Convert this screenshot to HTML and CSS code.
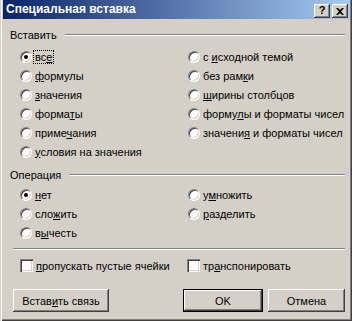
FILE: index.html
```html
<!DOCTYPE html>
<html lang="ru">
<head>
    <meta charset="UTF-8">
    <title>Специальная вставка</title>
    <link rel="stylesheet" href="styles.css">
</head>
<body>
    <div class="window">
        <div class="titlebar">
            <span class="title">Специальная вставка</span>
            <div class="tbtns">
                <span class="tbtn help">?</span>
                <span class="tbtn close">
                    <svg width="8" height="7" viewBox="0 0 8 7"><path d="M0 0h2l2 2 2-2h2L5 3.5 8 7H6L4 5 2 7H0l3-3.5z" fill="#000"/></svg>
                </span>
            </div>
        </div>

        <div class="content">
            <div class="section-head"><span>Вставить</span><div class="rule"></div></div>
            <div class="cols">
                <div class="col">
                    <label class="opt"><span class="radio checked"></span><span class="focus">вс<u>е</u></span></label>
                    <label class="opt"><span class="radio"></span><span><u>ф</u>ормулы</span></label>
                    <label class="opt"><span class="radio"></span><span><u>з</u>начения</span></label>
                    <label class="opt"><span class="radio"></span><span>форма<u>т</u>ы</span></label>
                    <label class="opt"><span class="radio"></span><span>приме<u>ч</u>ания</span></label>
                    <label class="opt"><span class="radio"></span><span><u>у</u>словия на значения</span></label>
                </div>
                <div class="col">
                    <label class="opt"><span class="radio"></span><span>с <u>и</u>сходной темой</span></label>
                    <label class="opt"><span class="radio"></span><span>без рам<u>к</u>и</span></label>
                    <label class="opt"><span class="radio"></span><span><u>ш</u>ирины столбцов</span></label>
                    <label class="opt"><span class="radio"></span><span>форму<u>л</u>ы и форматы чисел</span></label>
                    <label class="opt"><span class="radio"></span><span>значени<u>я</u> и форматы чисел</span></label>
                </div>
            </div>

            <div class="section-head second"><span>Операция</span><div class="rule"></div></div>
            <div class="cols">
                <div class="col">
                    <label class="opt"><span class="radio checked"></span><span><u>н</u>ет</span></label>
                    <label class="opt"><span class="radio"></span><span>сло<u>ж</u>ить</span></label>
                    <label class="opt"><span class="radio"></span><span>в<u>ы</u>честь</span></label>
                </div>
                <div class="col">
                    <label class="opt"><span class="radio"></span><span>у<u>м</u>ножить</span></label>
                    <label class="opt"><span class="radio"></span><span><u>р</u>азделить</span></label>
                </div>
            </div>

            <div class="sep"></div>

            <div class="cols checks">
                <label class="opt"><span class="check"></span><span><u>п</u>ропускать пустые ячейки</span></label>
                <label class="opt"><span class="check"></span><span>тр<u>а</u>нспонировать</span></label>
            </div>

            <div class="buttons">
                <button class="btn link">Встав<u>и</u>ть связь</button>
                <button class="btn ok">OK</button>
                <button class="btn cancel">Отмена</button>
            </div>
        </div>
    </div>
</body>
</html>
```

FILE: styles.css
```css
body {
    margin: 0;
    background: #d4d0c8;
    font-family: "Liberation Sans", Arial, sans-serif;
    font-size: 11px;
    color: #000;
}

.window {
    width: 352px;
    height: 321px;
    box-sizing: border-box;
    padding: 0 2px 3px 3px;
    background: #d4d0c8;
    box-shadow: inset 1px 0 #d4d0c8, inset 2px 0 #fff, inset -1px -1px #404040, inset -2px -2px #808080;
}

.titlebar {
    height: 19px;
    display: flex;
    align-items: center;
    justify-content: space-between;
    padding: 0 2px 0 3px;
    background: linear-gradient(to right, #0a246a, #a6caf0);
}

.title {
    color: #fff;
    font-weight: bold;
    font-size: 12px;
    margin-top: -1px;
}

.tbtns {
    display: flex;
    gap: 2px;
    margin-top: 3px;
}

.tbtn {
    width: 16px;
    height: 14px;
    box-sizing: border-box;
    display: flex;
    align-items: center;
    justify-content: center;
    background: #d4d0c8;
    box-shadow: inset -1px -1px #404040, inset 1px 1px #fff, inset -2px -2px #808080, inset 2px 2px #d4d0c8;
    font-weight: bold;
    font-size: 11px;
    line-height: 1;
}

.help {
    padding-bottom: 1px;
}

.content {
    padding: 9px 5px 0 7px;
}

.section-head {
    display: flex;
    align-items: center;
    gap: 8px;
    height: 13px;
    margin-bottom: 6px;
}

.section-head.second {
    margin-top: 7px;
    margin-bottom: 4px;
}

.rule {
    flex: 1;
    border-top: 1px solid #808080;
    border-bottom: 1px solid #fff;
}

.cols {
    display: grid;
    grid-template-columns: 168px 1fr;
    padding-left: 10px;
}

.opt {
    height: 19px;
    display: flex;
    align-items: center;
    gap: 3px;
}

.radio {
    position: relative;
    width: 12px;
    height: 12px;
    box-sizing: border-box;
    border-radius: 50%;
    border: 1px solid;
    border-color: #808080 #fff #fff #808080;
    background: #fff;
    box-shadow: inset 1px 1px #404040, inset -1px -1px #d4d0c8;
}

.radio.checked::after {
    content: "";
    position: absolute;
    left: 3px;
    top: 3px;
    width: 4px;
    height: 4px;
    border-radius: 50%;
    background: #000;
}

.focus {
    outline: 1px dotted #000;
    padding: 0 1px;
    margin-left: -1px;
}

.sep {
    margin-top: 6px;
    border-top: 1px solid #808080;
    border-bottom: 1px solid #fff;
    margin-left: 3px;
}

.checks {
    margin-top: 6px;
    grid-template-columns: 167px 1fr;
}

.check {
    width: 13px;
    height: 13px;
    background: #fff;
    box-shadow: inset 1px 1px #808080, inset 2px 2px #404040, inset -1px -1px #fff, inset -2px -2px #d4d0c8;
}

.buttons {
    display: flex;
    gap: 5px;
    margin-top: 14px;
    padding-left: 3px;
}

.btn {
    height: 23px;
    box-sizing: border-box;
    border: none;
    padding: 0;
    background: #d4d0c8;
    font-family: inherit;
    font-size: 11px;
    color: #000;
    box-shadow: inset -1px -1px #404040, inset 1px 1px #fff, inset -2px -2px #808080, inset 2px 2px #d4d0c8;
}

.link {
    width: 96px;
    margin-right: auto;
}

.ok {
    width: 80px;
    border: 1px solid #000;
}

.cancel {
    width: 77px;
}
```
